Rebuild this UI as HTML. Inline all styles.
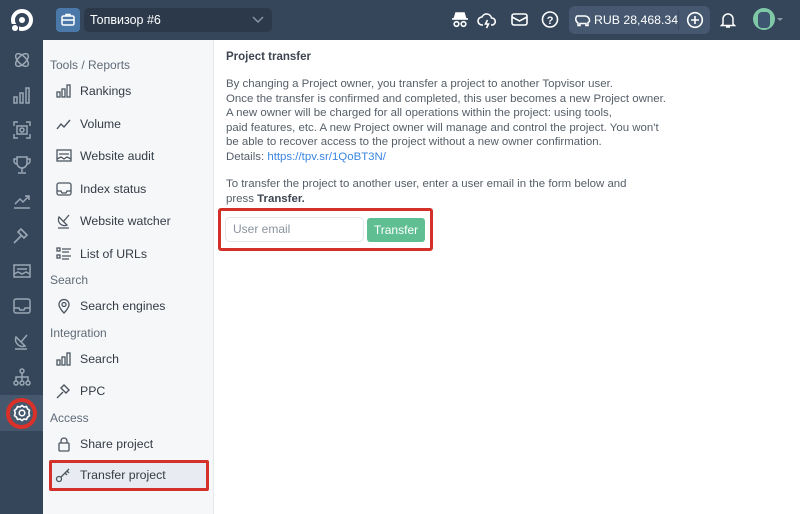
<!DOCTYPE html><html><head><style>
*{box-sizing:border-box;margin:0;padding:0}
body{width:800px;height:514px;overflow:hidden;font-family:"Liberation Sans",sans-serif;background:#fff;position:relative;color:#3d4651}
.top{position:absolute;left:0;top:0;width:800px;height:40px;background:#35465b}
.rail{position:absolute;left:0;top:40px;width:43px;height:474px;background:#35465b}
.sub{position:absolute;left:43px;top:40px;width:171px;height:474px;background:#f6f7f9;border-right:1px solid #e6e8ec}
.sec{position:absolute;left:7px;font-size:12px;color:#5f6b78}
.it{position:absolute;left:7px;width:158px;height:30px;font-size:12.3px;color:#333b45;line-height:30px;padding-left:30px}
.it svg{position:absolute;left:6px;top:7px}
.ri{position:absolute;left:12px}
.c{position:absolute;left:226px;font-size:11.45px;line-height:14.6px;color:#555e68}
a{color:#3a86e0;text-decoration:none}
</style></head><body>
<div class="top">
<svg style="position:absolute;left:9px;top:8px" width="26" height="26" viewBox="0 0 26 26"><circle cx="13" cy="12" r="9" fill="none" stroke="#fff" stroke-width="4"/><circle cx="13" cy="12" r="3" fill="#fff"/><rect x="2" y="16" width="8" height="9" fill="#35465b"/><circle cx="6" cy="20" r="3" fill="#fff"/></svg>
<div style="position:absolute;left:56px;top:8px;width:24px;height:24px;background:#4a78a8;border-radius:4px"><svg width="24" height="24" viewBox="0 0 24 24"><rect x="6" y="8" width="12" height="9" rx="1.5" fill="none" stroke="#fff" stroke-width="1.5"/><path d="M10 8V6.5h4V8M6 12h12" stroke="#fff" stroke-width="1.5" fill="none"/></svg></div>
<div style="position:absolute;left:84px;top:8px;width:188px;height:24px;background:#2b394a;border-radius:5px;color:#fff;font-size:12.5px;line-height:24px;padding-left:6px">Топвизор #6<svg style="position:absolute;right:8px;top:8px" width="12" height="8"><path d="M1 1l5 5 5-5" stroke="#8a97a6" fill="none" stroke-width="1.4"/></svg></div>
<svg style="position:absolute;left:450px;top:11px" width="120" height="18"><g stroke="#fff" fill="none" stroke-width="1.6"><path d="M6 2h8l1.5 5h-11z" fill="#fff"/><path d="M2 8h16"/><circle cx="6.5" cy="13" r="2.3"/><circle cx="13.5" cy="13" r="2.3"/><path d="M33 14h-1a4 4 0 010-8 5 5 0 019.5 1 3.5 3.5 0 01.5 7h-1M37.5 9l-2 4h3l-2 4"/><rect x="62" y="3" width="15" height="11" rx="2"/><path d="M62 6l7.5 4 7.5-4"/><circle cx="100" cy="8.5" r="7.5"/></g><text x="96.8" y="13" fill="#fff" font-size="11" font-family="Liberation Sans" font-weight="bold">?</text></svg>
<div style="position:absolute;left:569px;top:6px;width:141px;height:28px;background:#45586f;border-radius:6px;color:#fff;font-size:12.3px;line-height:28px;padding-left:25px">RUB 28,468.34
<svg style="position:absolute;left:5px;top:7px" width="18" height="15"><path d="M3 3h8a4.5 4.5 0 014.5 4.5v1l-1.5 1v3h-2v-2H6v2H4V10A4.5 4.5 0 013 3z" fill="none" stroke="#fff" stroke-width="1.5"/></svg>
<div style="position:absolute;left:109px;top:4px;height:20px;border-left:1px solid #3a4b5f"></div>
<svg style="position:absolute;left:117px;top:5px" width="18" height="18"><circle cx="9" cy="9" r="7.3" fill="none" stroke="#fff" stroke-width="1.6"/><path d="M9 5v8M5 9h8" stroke="#fff" stroke-width="1.6"/></svg></div>
<svg style="position:absolute;left:719px;top:10px" width="18" height="20"><path d="M4 14V9a5 5 0 0110 0v5l1.5 1.5h-13z M7 17h4" fill="none" stroke="#fff" stroke-width="1.5"/></svg>
<div style="position:absolute;left:753px;top:8px;width:22px;height:22px;border-radius:50%;background:#7fc9a7"></div>
<div style="position:absolute;left:758px;top:12px;width:12px;height:16px;border-radius:4px;background:#3d5570"></div>
<div style="position:absolute;left:777px;top:18px;border:3px solid transparent;border-top-color:#8a97a6"></div>
</div>
<div class="rail">
<svg class="ri" style="top:10px" width="20" height="20"><g fill="none" stroke="#9aa6b4" stroke-width="1.5"><ellipse cx="10" cy="10" rx="8" ry="4" transform="rotate(45 10 10)"/><ellipse cx="10" cy="10" rx="8" ry="4" transform="rotate(-45 10 10)"/></g></svg>
<svg class="ri" style="top:45px" width="20" height="20"><g fill="none" stroke="#9aa6b4" stroke-width="1.5"><rect x="2" y="12" width="3" height="6"/><rect x="8" y="8" width="3" height="10"/><rect x="14" y="3" width="3" height="15"/></g></svg>
<svg class="ri" style="top:80px" width="20" height="20"><g fill="none" stroke="#9aa6b4" stroke-width="1.5"><path d="M2 6V2h4M14 2h4v4M18 14v4h-4M6 18H2v-4"/><rect x="5" y="6" width="10" height="8"/><circle cx="10" cy="10" r="2"/></g></svg>
<svg class="ri" style="top:115px" width="20" height="20"><g fill="none" stroke="#9aa6b4" stroke-width="1.5"><path d="M5 2h10v6a5 5 0 01-10 0zM10 13v4M6 18h8M5 4H2v2a3 3 0 003 3M15 4h3v2a3 3 0 01-3 3"/></g></svg>
<svg class="ri" style="top:150px" width="20" height="20"><g fill="none" stroke="#9aa6b4" stroke-width="1.5"><path d="M2 18h16M3 14l5-5 3 3 6-6M13 6h4v4"/></g></svg>
<svg class="ri" style="top:186px" width="20" height="20"><g fill="none" stroke="#9aa6b4" stroke-width="1.6"><path d="M9 3l6 6-3 3-6-6zM9 10l-7 7"/></g></svg>
<svg class="ri" style="top:221px" width="20" height="20"><g fill="none" stroke="#9aa6b4" stroke-width="1.5"><rect x="2" y="4" width="16" height="12"/><path d="M5 8h10M2 13l4-2 4 2 4-2 4 2"/></g></svg>
<svg class="ri" style="top:256px" width="20" height="20"><g fill="none" stroke="#9aa6b4" stroke-width="1.5"><rect x="2" y="3" width="16" height="14" rx="2"/><path d="M2 12h5l1 2h4l1-2h5"/></g></svg>
<svg class="ri" style="top:291px" width="20" height="20"><g fill="none" stroke="#9aa6b4" stroke-width="1.5"><path d="M4 6a7 7 0 009 9zM9 11l6-7M3 18h12"/></g></svg>
<svg class="ri" style="top:327px" width="20" height="20"><g fill="none" stroke="#9aa6b4" stroke-width="1.5"><circle cx="10" cy="4" r="2"/><circle cx="4" cy="16" r="2"/><circle cx="10" cy="16" r="2"/><circle cx="16" cy="16" r="2"/><path d="M10 6v8M4 14v-4h12v4"/></g></svg>
<div style="position:absolute;left:0;top:355px;width:43px;height:36px;background:#46586d"></div>
<div style="position:absolute;left:6px;top:358px;width:31px;height:31px;border-radius:50%;border:4px solid #d9302a"></div>
<svg class="ri" style="top:363px;left:12px" width="20" height="20"><g fill="none" stroke="#fff" stroke-width="1.6"><circle cx="10" cy="10" r="2.8"/><path d="M10 2.5l2 1.5 2.5-.5 1 2.3 2 1.5-.7 2.7.7 2.7-2 1.5-1 2.3-2.5-.5-2 1.5-2-1.5-2.5.5-1-2.3-2-1.5.7-2.7-.7-2.7 2-1.5 1-2.3 2.5.5z"/></g></svg>
</div>
<div class="sub">
<div class="sec" style="top:18px">Tools / Reports</div>
<div class="it" style="top:36px"><svg width="16" height="16"><g fill="none" stroke="#4b5560" stroke-width="1.3"><rect x="1" y="9" width="3" height="5"/><rect x="6" y="6" width="3" height="8"/><rect x="11" y="2" width="3" height="12"/></g></svg>Rankings</div>
<div class="it" style="top:69px"><svg width="16" height="16"><path d="M1 13l4-5 3 3 6-7" fill="none" stroke="#4b5560" stroke-width="1.4"/></svg>Volume</div>
<div class="it" style="top:101px"><svg width="16" height="16"><g fill="none" stroke="#4b5560" stroke-width="1.3"><rect x="1" y="2" width="14" height="11"/><path d="M3 6h10M1 11l4-2 3 2 3-2 4 2"/></g></svg>Website audit</div>
<div class="it" style="top:134px"><svg width="16" height="16"><g fill="none" stroke="#4b5560" stroke-width="1.3"><rect x="1" y="2" width="14" height="12" rx="2"/><path d="M1 10h4l1 2h4l1-2h4"/></g></svg>Index status</div>
<div class="it" style="top:166px"><svg width="16" height="16"><g fill="none" stroke="#4b5560" stroke-width="1.3"><path d="M3 4a6 6 0 008 8zM7 9l6-7M2 15h11"/></g></svg>Website watcher</div>
<div class="it" style="top:199px"><svg width="16" height="16"><g fill="none" stroke="#4b5560" stroke-width="1.3"><rect x="1" y="2" width="3" height="3"/><rect x="1" y="9" width="3" height="3"/><path d="M6 3h9M6 6h7M6 10h9M6 13h7"/></g></svg>List of URLs</div>
<div class="sec" style="top:233px">Search</div>
<div class="it" style="top:251px"><svg width="16" height="16"><g fill="none" stroke="#4b5560" stroke-width="1.3"><path d="M8 15s-5-5-5-8.5a5 5 0 0110 0C13 10 8 15 8 15z"/><circle cx="8" cy="6.5" r="2"/></g></svg>Search engines</div>
<div class="sec" style="top:286px">Integration</div>
<div class="it" style="top:304px"><svg width="16" height="16"><g fill="none" stroke="#4b5560" stroke-width="1.3"><rect x="1" y="9" width="3" height="5"/><rect x="6" y="6" width="3" height="8"/><rect x="11" y="2" width="3" height="12"/></g></svg>Search</div>
<div class="it" style="top:336px"><svg width="16" height="16"><g fill="none" stroke="#4b5560" stroke-width="1.4"><path d="M8 2l5 5-3 3-5-5zM7 9l-6 6"/></g></svg>PPC</div>
<div class="sec" style="top:371px">Access</div>
<div class="it" style="top:389px"><svg width="16" height="16"><g fill="none" stroke="#4b5560" stroke-width="1.3"><rect x="3" y="7" width="10" height="8" rx="1"/><path d="M5 7V5a3 3 0 016 0v2"/></g></svg>Share project</div>
<div class="it" style="top:420px;left:6px;width:160px;height:31px;background:#e8ebf1;border:3px solid #d4302a;border-radius:2px;line-height:25px;padding-left:28px"><svg width="16" height="16" style="left:3px;top:4px"><g fill="none" stroke="#4b5560" stroke-width="1.3"><circle cx="4" cy="12" r="2.5"/><path d="M6 10l8-8M10 6l2 2M12 4l2 2"/></g></svg>Transfer project</div>
</div>
<div class="c" style="top:50px;font-weight:bold;color:#3d4651;font-size:11.5px">Project transfer</div>
<div class="c" style="top:77px">By changing a Project owner, you transfer a project to another Topvisor user.<br>Once the transfer is confirmed and completed, this user becomes a new Project owner.<br>A new owner will be charged for all operations within the project: using tools,<br>paid features, etc. A new Project owner will manage and control the project. You won't<br>be able to recover access to the project without a new owner confirmation.<br>Details: <a>https://tpv.sr/1QoBT3N/</a></div>
<div class="c" style="top:177px">To transfer the project to another user, enter a user email in the form below and<br>press <b style="color:#3d4651">Transfer.</b></div>
<div style="position:absolute;left:218px;top:208px;width:215px;height:43px;border:3px solid #d4302a;border-radius:3px"></div>
<div style="position:absolute;left:225px;top:217px;width:139px;height:25px;border:1px solid #e3e6ea;border-radius:5px;font-size:12px;color:#8a939d;line-height:23px;padding-left:7px">User email</div>
<div style="position:absolute;left:367px;top:218px;width:58px;height:24px;background:#5fbf93;border-radius:3px;color:#fff;font-size:12px;line-height:24px;text-align:center">Transfer</div>
</body></html>
